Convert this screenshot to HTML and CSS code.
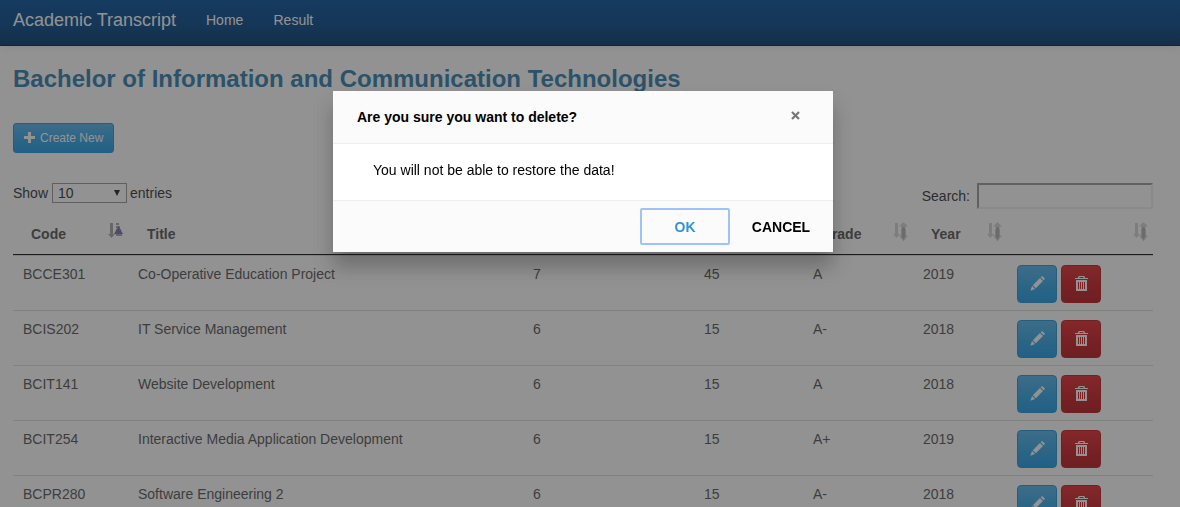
FILE: index.html
```html
<!DOCTYPE html>
<html lang="en">
<head>
<meta charset="utf-8">
<title>Academic Transcript</title>
<link rel="stylesheet" href="styles.css">
</head>
<body>
<svg class="sprite" aria-hidden="true">
  <symbol id="pencil" viewBox="0 0 16 16"><path d="M11.400 1.400 13 0l3 3-1.400 1.600zM10.600 2.200l3.200 3.200-7.600 7.600L3 9.800zM2.200 10.600l3.200 3.200L.300 15.700z"/></symbol>
  <symbol id="trash" viewBox="0 0 13 15"><path fill-rule="evenodd" d="M3 1 4 0h5l1 1v1h3v1H0V2h3zM4.500 1v1h4V1zM1 4h11v11H1zM3 6v7h1V6zm2 0v7h1V6zm2 0v7h1V6zm2 0v7h1V6z"/></symbol>
  <symbol id="sort" viewBox="0 0 16 20"><path class="arrow" d="M2 1h3v11h2l-3.500 4L0 12h2z"/><path class="arrow" d="M10.500 0 15 4.500h-2.500v9H15L10.500 19.500 6 13.500h2.500v-9H6z"/><path class="core" d="M9.500 5h2l1 3v6l-2 4-2-4V8z"/></symbol>
  <symbol id="sorted" viewBox="0 0 16 20"><path class="arrow" d="M2 1h3v11h2l-3.500 4L0 12h2zM8 1h3v2H8zm0 3h4v2H8zm0 3h5v3H8zm0 4h6v3H8z"/><path class="core" d="M10.500 4 15 12H6z"/></symbol>
</svg>
<nav class="navbar"><a class="brand">Academic Transcript</a><a class="link">Home</a><a class="link">Result</a></nav>
<main class="page">
  <h1 class="title">Bachelor of Information and Communication Technologies</h1>
  <a class="create"><svg class="plus" viewBox="0 0 11 11"><path d="M4 0h3v4h4v3H7v4H4V7H0V4h4z"/></svg>Create New</a>
  <div class="controls">
    <div class="length">Show <span class="select">10<i class="caret"></i></span> entries</div>
    <label class="search">Search: <input class="field" type="text"></label>
  </div>
  <table class="grid">
    <colgroup><col class="c-code"><col class="c-title"><col class="c-level"><col class="c-credit"><col class="c-grade"><col class="c-year"><col class="c-act"></colgroup>
    <thead><tr>
      <th><div class="head">Code<svg class="sort active"><use href="#sorted"/></svg></div></th>
      <th class="wide"><div class="head">Title</div></th><th></th><th></th>
      <th><div class="head">Grade<svg class="sort"><use href="#sort"/></svg></div></th>
      <th><div class="head">Year<svg class="sort"><use href="#sort"/></svg></div></th>
      <th><div class="head"><svg class="sort"><use href="#sort"/></svg></div></th>
    </tr></thead>
    <tbody>
      <tr><td>BCCE301</td><td>Co-Operative Education Project</td><td>7</td><td>45</td><td>A</td><td>2019</td><td><div class="actions"><a class="btn edit"><svg class="icon"><use href="#pencil"/></svg></a><a class="btn delete"><svg class="icon bin"><use href="#trash"/></svg></a></div></td></tr>
      <tr><td>BCIS202</td><td>IT Service Management</td><td>6</td><td>15</td><td>A-</td><td>2018</td><td><div class="actions"><a class="btn edit"><svg class="icon"><use href="#pencil"/></svg></a><a class="btn delete"><svg class="icon bin"><use href="#trash"/></svg></a></div></td></tr>
      <tr><td>BCIT141</td><td>Website Development</td><td>6</td><td>15</td><td>A</td><td>2018</td><td><div class="actions"><a class="btn edit"><svg class="icon"><use href="#pencil"/></svg></a><a class="btn delete"><svg class="icon bin"><use href="#trash"/></svg></a></div></td></tr>
      <tr><td>BCIT254</td><td>Interactive Media Application Development</td><td>6</td><td>15</td><td>A+</td><td>2019</td><td><div class="actions"><a class="btn edit"><svg class="icon"><use href="#pencil"/></svg></a><a class="btn delete"><svg class="icon bin"><use href="#trash"/></svg></a></div></td></tr>
      <tr><td>BCPR280</td><td>Software Engineering 2</td><td>6</td><td>15</td><td>A-</td><td>2018</td><td><div class="actions"><a class="btn edit"><svg class="icon"><use href="#pencil"/></svg></a><a class="btn delete"><svg class="icon bin"><use href="#trash"/></svg></a></div></td></tr>
    </tbody>
  </table>
</main>
<div class="overlay">
  <div class="dialog">
    <header class="d-head">Are you sure you want to delete?<svg class="close" viewBox="0 0 9 9"><path d="M1 1l7 7M8 1 1 8"/></svg></header>
    <div class="d-body">You will not be able to restore the data!</div>
    <footer class="d-foot"><button class="d-btn ok">OK</button><button class="d-btn">CANCEL</button></footer>
  </div>
</div>
</body>
</html>
```

FILE: styles.css
```css
* { box-sizing: border-box; }
body { margin: 0; height: 507px; overflow: hidden; background: #fff; color: #555; font: 14px/20px "Liberation Sans", Arial, sans-serif; }
.sprite { position: absolute; width: 0; height: 0; }
.navbar { display: flex; height: 46px; padding: 0 13px; line-height: 40px; background: linear-gradient(#04519b, #044687 60%, #033769); border-bottom: 1px solid #022241; box-shadow: 0 1px 10px rgba(0,0,0,.1); color: #fff; }
.brand { width: 193px; font-size: 18px; }
.link { width: 67.5px; }
.page { padding: 20px 27px 0 13px; }
.title { margin: 0; font-size: 24px; line-height: 26px; color: #317eac; white-space: nowrap; }
.create { display: flex; align-items: center; width: 101px; height: 30px; margin-top: 31px; padding-left: 10px; border: 1px solid #2196dc; border-radius: 3px; background: linear-gradient(#54b4eb, #2fa4e7 60%, #1d9ce5); color: #fff; font-size: 12px; }
.plus { width: 11px; height: 11px; margin: -1px 5px 0 0; fill: currentColor; }
.controls { display: flex; justify-content: space-between; height: 61px; padding-top: 30px; color: #333; }
.length { display: flex; gap: 4px; }
.select { display: flex; justify-content: space-between; align-items: center; width: 75px; height: 20px; margin-right: -1px; padding: 0 6px 0 5px; border: 1px solid #999; }
.caret { border: 3.5px solid transparent; border-top: 6px solid #222; border-bottom: 0; }
.search { display: flex; align-items: center; gap: 7px; height: 26px; }
.field { width: 176px; height: 26px; border: 2px inset #eee; background: #fff; }
.grid { width: 1140px; table-layout: fixed; border-collapse: separate; border-spacing: 0; }
.c-code { width: 115px; }
.c-title { width: 395px; }
.c-level { width: 171px; }
.c-credit { width: 109px; }
.c-grade { width: 110px; }
.c-year { width: 94px; }
.c-act { width: 146px; }
.grid th { height: 41px; padding: 0 4px 0 18px; border-bottom: 1px solid #111; text-align: left; vertical-align: top; }
.grid th.wide { padding-left: 19px; }
.head { display: flex; justify-content: space-between; padding-top: 10px; }
.sort { width: 16px; height: 20px; margin: -2px 0 0 auto; }
.arrow { fill: #d4d4d4; }
.core { fill: #b0b0b0; }
.active .arrow { fill: #a8a8a8; }
.active { --arrow: #a8a8a8; --core: #7474ae; }
.arrow { fill: var(--arrow, #d4d4d4); }
.core { fill: var(--core, #b0b0b0); }
.grid td { height: 55px; padding: 8px 10px; border-top: 1px solid #ddd; vertical-align: top; }
.actions { display: flex; gap: 4px; padding-top: 1px; margin-bottom: -1px; }
.btn { display: flex; align-items: center; justify-content: center; width: 40px; height: 38px; border: 1px solid #2196dc; border-radius: 4px; background: linear-gradient(#54b4eb, #2fa4e7 60%, #1d9ce5); }
.delete { border-color: #c01b21; background: linear-gradient(#e12b31, #c71c22 60%, #b5191f); }
.icon { width: 15px; height: 15px; margin-top: -1px; fill: #fff; }
.bin { width: 13px; }
.overlay { position: fixed; inset: 0; padding-top: 91px; padding-left: 333px; background: rgba(37,37,37,.5); }
.dialog { width: 500px; height: 161px; background: #fff; color: #000; box-shadow: 0 15px 20px rgba(0,0,0,.25); border-radius: 1px; }
.d-head { display: flex; justify-content: space-between; align-items: center; height: 53px; padding: 0 33px 0 24px; border-bottom: 1px solid #eee; background: #fbfbfb; font-weight: bold; }
.close { width: 9px; height: 9px; margin-top: -3px; fill: none; stroke: #777; stroke-width: 2.2; }
.d-body { height: 56px; padding: 16px 40px; }
.d-foot { display: flex; justify-content: flex-end; height: 52px; padding: 8px 7px 0 0; border-top: 1px solid #eee; background: #fbfbfb; }
.d-btn { width: 90px; height: 36px; margin-left: 5px; padding: 0; border: 0; background: none; color: #000; font: bold 14px "Liberation Sans", Arial, sans-serif; }
.ok { height: 37px; margin: -1px 1px 0 0; border: 2px solid #9ec2fa; border-radius: 2px; color: #3593d2; }
```
